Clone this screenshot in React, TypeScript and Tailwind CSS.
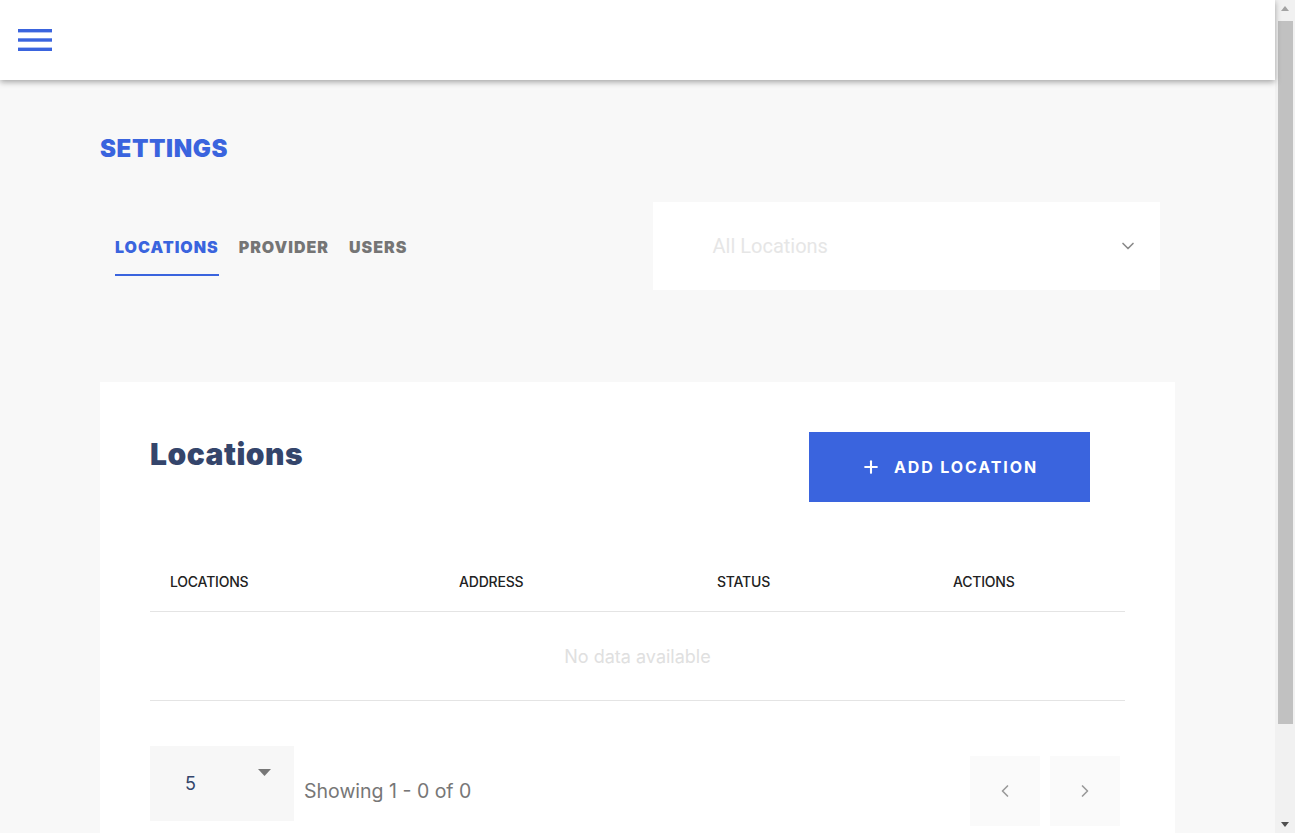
import { ChevronDown, ChevronLeft, ChevronRight, Plus } from "lucide-react";

const heading = "font-['Inter',_'Liberation_Sans',_sans-serif]";

const tabs = ["LOCATIONS", "PROVIDER", "USERS"];

const columns = [
  { label: "LOCATIONS", width: "w-[289px]" },
  { label: "ADDRESS", width: "w-[258px]" },
  { label: "STATUS", width: "w-[236px]" },
  { label: "ACTIONS", width: "flex-1" },
];

const Header = () => (
  <header className="sticky top-0 z-10 h-20 shrink-0 bg-white shadow-[0_2px_6px_rgba(0,0,0,0.35)] flex items-center px-[18px]">
    <button type="button" aria-label="Open menu" className="text-[#3a64de]">
      <svg width="34" height="23" viewBox="0 0 34 23" fill="currentColor">
        <rect x="0" y="0" width="34" height="3.4" />
        <rect x="0" y="9.3" width="34" height="3.4" />
        <rect x="0" y="18.6" width="34" height="3.4" />
      </svg>
    </button>
  </header>
);

const Tabs = ({ active = 0 }: { active?: number }) => (
  <div className="flex items-center gap-[20px] px-[15px] h-[88px]">
    {tabs.map((tab, i) => (
      <div key={tab} className="relative h-full flex items-center pt-[2px]">
        <span
          className={`${heading} text-[16px] font-black tracking-[1px] ${i === active ? "text-[#3a64de]" : "text-[#757575]"}`}
        >
          {tab}
        </span>
        {i === active && <div className="absolute left-0 right-0 top-[72px] h-[2px] bg-[#3a64de]" />}
      </div>
    ))}
  </div>
);

const LocationSelect = () => (
  <div className="px-[15px]">
    <div className="h-[88px] bg-white flex items-center justify-between pl-[60px] pr-[22px]">
      <span className="text-[20px] text-[#e6e6e6] font-['Roboto',_sans-serif]">All Locations</span>
      <ChevronDown size={20} strokeWidth={2} className="text-[#8a8a8a]" />
    </div>
  </div>
);

const LocationsTable = () => (
  <div className="mt-[50px] font-['Inter',_sans-serif]">
    <div className="flex items-center h-[60px] border-b border-[#e4e4e4]">
      {columns.map((col) => (
        <div key={col.label} className={`${col.width} pl-5 text-[14px] font-medium text-[#222] tracking-[-0.2px]`}>
          {col.label}
        </div>
      ))}
    </div>
    <div className="h-[89px] flex items-center justify-center border-b border-[#e4e4e4] text-[18px] text-[#e0e0e0]">
      No data available
    </div>
  </div>
);

const Pagination = () => (
  <div className="mt-[45px] flex items-start font-['Inter',_sans-serif]">
    <div className="relative w-[144px] h-[75px] bg-[#f7f7f7] flex items-center pl-[35px]">
      <span className="text-[18px] text-[#34456b]">5</span>
      <svg className="absolute left-[108px] top-[23px]" width="13" height="7" viewBox="0 0 13 7" fill="#777">
        <path d="M0 0h13L6.5 7z" />
      </svg>
    </div>
    <span className="ml-[10px] mt-[32px] text-[19.5px] leading-[26px] text-[#777]">Showing 1 - 0 of 0</span>
    <div className="ml-auto mr-[5px] mt-[10px] flex gap-[10px]">
      <button type="button" aria-label="Previous" className="w-[70px] h-[70px] bg-[#fafafa] flex items-center justify-center text-[#9a9a9a]">
        <ChevronLeft size={20} strokeWidth={2} />
      </button>
      <button type="button" aria-label="Next" className="w-[70px] h-[70px] bg-[#fafafa] flex items-center justify-center text-[#9a9a9a]">
        <ChevronRight size={20} strokeWidth={2} />
      </button>
    </div>
  </div>
);

const Scrollbar = () => (
  <div className="w-5 shrink-0 h-full bg-[#f1f1f1] flex flex-col items-center">
    <div className="h-[17px] flex items-center justify-center">
      <svg width="8" height="5" viewBox="0 0 8 5" fill="#a3a3a3">
        <path d="M0 5h8L4 0z" />
      </svg>
    </div>
    <div className="w-[15px] h-[703px] mt-[4px] bg-[#c1c1c1]" />
    <div className="mt-auto h-[17px] flex items-center justify-center">
      <svg width="8" height="5" viewBox="0 0 8 5" fill="#505050">
        <path d="M0 0h8L4 5z" />
      </svg>
    </div>
  </div>
);

export default function App() {
  return (
    <div className="h-screen flex overflow-hidden bg-[#f8f8f8]">
      <div className="flex-1 min-w-0 flex flex-col">
        <Header />
        <main className="px-[100px] pb-[70px]">
          <h1 className={`${heading} pt-[55px] text-[24px] leading-[28px] font-black text-[#3a64de] tracking-[0.6px]`}>
            SETTINGS
          </h1>
          <div className="mt-[39px] grid grid-cols-2">
            <Tabs />
            <LocationSelect />
          </div>
          <section className="mt-[92px] bg-white px-[50px] pt-[50px] pb-[50px]">
            <div className="flex items-start">
              <h2 className={`${heading} mt-[4px] text-[30px] leading-[36px] font-black text-[#34456b] tracking-[0.5px]`}>
                Locations
              </h2>
              <button
                type="button"
                className={`${heading} ml-auto mr-[35px] w-[281px] h-[70px] bg-[#3a64de] text-white flex items-center justify-center gap-[13px] text-[16px] font-bold tracking-[1.9px]`}
              >
                <Plus size={20} strokeWidth={2.5} />
                ADD LOCATION
              </button>
            </div>
            <LocationsTable />
            <Pagination />
          </section>
        </main>
      </div>
      <Scrollbar />
    </div>
  );
}
